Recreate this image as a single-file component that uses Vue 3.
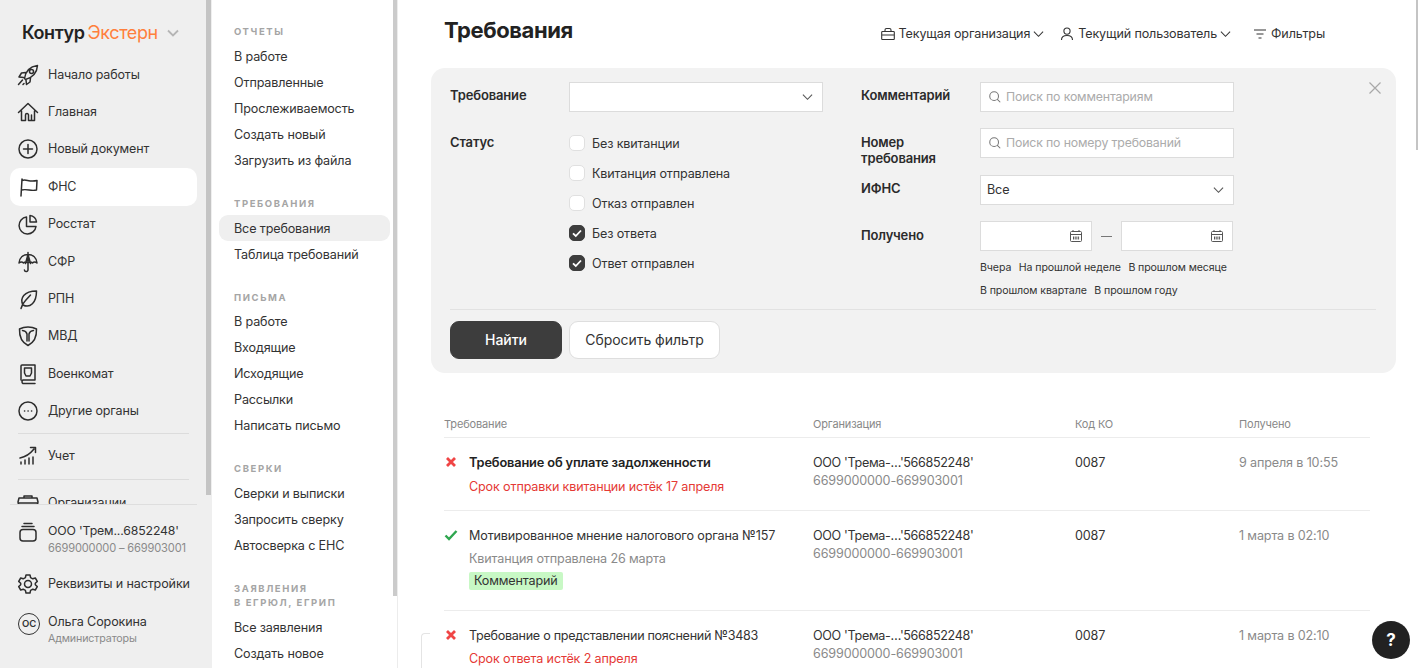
<script setup>
const reports = ['В работе', 'Отправленные', 'Прослеживаемость', 'Создать новый', 'Загрузить из файла']
const demands = ['Все требования', 'Таблица требований']
const letters = ['В работе', 'Входящие', 'Исходящие', 'Рассылки', 'Написать письмо']
const checks = ['Сверки и выписки', 'Запросить сверку', 'Автосверка с ЕНС']
const claims = ['Все заявления', 'Создать новое']
const statuses = [
  { label: 'Без квитанции', on: false },
  { label: 'Квитанция отправлена', on: false },
  { label: 'Отказ отправлен', on: false },
  { label: 'Без ответа', on: true },
  { label: 'Ответ отправлен', on: true },
]
const rows = [
  { ok: false, bold: true, title: 'Требование об уплате задолженности', sub: 'Срок отправки квитанции истёк 17 апреля', date: '9 апреля в 10:55' },
  { ok: true, title: 'Мотивированное мнение налогового органа №157', sub: 'Квитанция отправлена 26 марта', tag: 'Комментарий', date: '1 марта в 02:10' },
  { ok: false, tight: true, title: 'Требование о представлении пояснений №3483', sub: 'Срок ответа истёк 2 апреля', date: '1 марта в 02:10' },
]
const nav = [
  { label: 'Начало работы', icon: 'rocket' },
  { label: 'Главная', icon: 'home' },
  { label: 'Новый документ', icon: 'plus' },
  { label: 'ФНС', icon: 'flag', active: true },
  { label: 'Росстат', icon: 'pie' },
  { label: 'СФР', icon: 'umbrella' },
  { label: 'РПН', icon: 'leaf' },
  { label: 'МВД', icon: 'shield' },
  { label: 'Военкомат', icon: 'book' },
  { label: 'Другие органы', icon: 'dots' },
]
const paths = {
  rocket: 'M8.500 15.500C9.500 8 14.500 3.500 21.500 2.500c-.5 7-5 12-12 14zM9.500 9.500 5.500 10l-2.500 4 4.500.5M14.500 15l-.5 4-3.500 2.500-.5-4.500M15.500 6.500a2 2 0 1 0 2 2 2 2 0 0 0-2-2zM6.500 17 2.500 21.500M8 20.500l-1 1',
  home: 'M2.500 12.500 12 3.500l9.500 9M5.500 11v9.500H9.500V15a1.500 1.500 0 0 1 3 0v5.500M12.500 20.500h3V15M18.500 11v9.500h-3',
  plus: 'M12 3a9 9 0 1 0 0 18 9 9 0 0 0 0-18zM12 7.500v9M7.500 12h9',
  flag: 'M5 21 6 4M6 5.500c4-2 7 2 15 0l-.5 9.500c-6 1.500-9-1.500-15 0',
  pie: 'M10.500 5a8.500 8.500 0 1 0 9.500 9.500h-9.500zM14 3.500V10h6.500A7 7 0 0 0 14 3.500z',
  umbrella: 'M3 13C3.500 8 7 4.500 12 4.500s8.500 3.500 9 8.500c-1.500-1.500-3.300-1.500-4.500 0-1.200-1.500-3.300-1.500-4.500 0-1.200-1.500-3.300-1.500-4.500 0-1.200-1.500-3-1.500-4.500 0zM12 2.500V19.500a1.800 1.800 0 0 1-3.600.5M9.500 13.500 12 4.500l2.500 9',
  leaf: 'M5 21.500c1-3.500 2.500-6 4.500-8l5-5.500M7 18C3.500 11.500 8 4 20.500 4c0 12-6.500 17.500-13.500 14z',
  shield: 'M12 3c3 0 6 .7 8.500 2 .3 7.500-2.500 13.500-8.500 16.500C6 18.500 3.200 12.500 3.500 5 6 3.700 9 3 12 3zM6.500 6.500c2.500.2 4 1.500 4.500 3.500v7M17.500 6.500c-2.500.2-4 1.500-4.500 3.500v7',
  book: 'M5 18V4a1 1 0 0 1 1-1h13v15H7a2 2 0 0 0 0 3.500h12M8.500 6h7v5l-1.500 3h-4l-1.500-3z',
  dots: 'M12 3a9 9 0 1 0 0 18 9 9 0 0 0 0-18zM8.500 12h.2M12 12h.2M15.500 12h.2',
}
</script>

<template>
  <div class="page">
    <aside class="side">
      <div class="logo"><span class="logo-a">Контур</span><span class="logo-b">Экстерн</span>
        <svg class="logo-arrow" viewBox="0 0 12 8" width="12" height="8"><path d="M1 1.500 6 6.500l5-5" fill="none" stroke="#b5b5b5" stroke-width="1.800"/></svg>
      </div>
      <nav class="nav">
        <a v-for="n in nav" :key="n.label" class="nav-item" :class="{ active: n.active }">
          <svg class="ico" viewBox="0 0 24 24" width="24" height="24"><path :d="paths[n.icon]" /></svg>
          <span>{{ n.label }}</span>
        </a>
        <div class="nav-sep first"></div>
        <a class="nav-item short">
          <svg class="ico" viewBox="0 0 24 24" width="24" height="24"><path d="M5 20v-2M9 20v-4M13 20v-6M17 20v-7M4 14c5-1 10-4 14-9M14.500 3.500h5v5" /></svg>
          <span>Учет</span>
        </a>
        <div class="nav-sep"></div>
        <a class="nav-item clipped">
          <svg class="ico" viewBox="0 0 24 24" width="24" height="24"><path d="M8 7V5h8v2M3 7h18l1 4-2 8H4l-2-8zM2 12h20" /></svg>
          <span>Организации</span>
        </a>
      </nav>
      <footer class="side-foot">
        <a class="foot-item org-row">
          <svg class="ico" viewBox="0 0 24 24" width="24" height="24"><path d="M8 3.500h8M6 6.500h12M7 9.500h10a3 3 0 0 1 3 3V18a3 3 0 0 1-3 3H7a3 3 0 0 1-3-3v-5.500a3 3 0 0 1 3-3z" /></svg>
          <div><div class="org-name">ООО 'Трем...6852248'</div><div class="foot-sub">6699000000 – 669903001</div></div>
        </a>
        <a class="foot-item gear">
          <svg class="ico" viewBox="0 0 24 24" width="24" height="24"><path d="M12 8.500a3.500 3.500 0 1 0 0 7 3.500 3.500 0 0 0 0-7zM10 3h4l.6 2.600 2.200 1.200 2.500-.8 2 3.400-2 1.800v1.600l2 1.800-2 3.400-2.500-.8-2.200 1.200L14 21h-4l-.6-2.600-2.200-1.200-2.500.8-2-3.400 2-1.800v-1.600l-2-1.800 2-3.400 2.500.8 2.200-1.200z" /></svg>
          <span>Реквизиты и настройки</span>
        </a>
        <a class="foot-item user">
          <span class="avatar">ОС</span>
          <div><div>Ольга Сорокина</div><div class="foot-sub small">Администраторы</div></div>
        </a>
      </footer>
      <i class="bar side-bar"></i>
    </aside>

    <aside class="sub">
      <div class="group first">
        <div class="cap">ОТЧЕТЫ</div>
        <a v-for="t in reports" :key="t" class="sub-item">{{ t }}</a>
      </div>
      <div class="group">
        <div class="cap">ТРЕБОВАНИЯ</div>
        <a v-for="(t, i) in demands" :key="t" class="sub-item" :class="{ active: i === 0 }">{{ t }}</a>
      </div>
      <div class="group mail">
        <div class="cap">ПИСЬМА</div>
        <a v-for="t in letters" :key="t" class="sub-item">{{ t }}</a>
      </div>
      <div class="group">
        <div class="cap">СВЕРКИ</div>
        <a v-for="t in checks" :key="t" class="sub-item">{{ t }}</a>
      </div>
      <div class="group last">
        <div class="cap">ЗАЯВЛЕНИЯ<br>В ЕГРЮЛ, ЕГРИП</div>
        <a v-for="t in claims" :key="t" class="sub-item">{{ t }}</a>
      </div>
      <i class="bar sub-bar"></i>
    </aside>

    <main class="main">
      <header class="head">
        <h1>Требования</h1>
        <div class="tools">
          <a class="tool org">
            <svg viewBox="0 0 16 16" width="16" height="16"><path d="M2.500 5.500h11a.8.8 0 0 1 .8.8v6.400a.8.8 0 0 1-.8.8h-11a.8.8 0 0 1-.8-.8V6.300a.8.8 0 0 1 .8-.8zM5 5.500V4a1.500 1.500 0 0 1 1.500-1.500h3A1.500 1.500 0 0 1 11 4v1.500M1.700 9h12.600" /></svg>
            Текущая организация
            <svg class="chev" viewBox="0 0 12 8" width="11" height="8"><path d="M1 1.500 6 6.500l5-5" /></svg>
          </a>
          <a class="tool usr">
            <svg viewBox="0 0 16 16" width="16" height="16"><path d="M8 2a3 3 0 1 0 0 6.200A3 3 0 0 0 8 2zM2.500 14c0-3 2.200-4.500 5.500-4.500s5.500 1.500 5.500 4.500" /></svg>
            Текущий пользователь
            <svg class="chev" viewBox="0 0 12 8" width="11" height="8"><path d="M1 1.500 6 6.500l5-5" /></svg>
          </a>
          <a class="tool flt">
            <svg viewBox="0 0 16 16" width="16" height="16"><path d="M2 4h12M4.500 8h7M6.500 12h3" /></svg>
            Фильтры
          </a>
        </div>
      </header>

      <section class="panel">
        <svg class="close" viewBox="0 0 14 14" width="14" height="14"><path d="M1.500 1.500l11 11M12.500 1.500l-11 11" /></svg>
        <div class="cols">
          <div class="col left">
            <div class="line r1">
              <label>Требование</label>
              <div class="field w254 sel">
                <svg class="chev" viewBox="0 0 12 8" width="11" height="8"><path d="M1 1.500 6 6.500l5-5" /></svg>
              </div>
            </div>
            <div class="line r2">
              <label>Статус</label>
              <div class="checks">
                <div v-for="s in statuses" :key="s.label" class="check">
                  <span class="box" :class="{ on: s.on }">
                    <svg v-if="s.on" viewBox="0 0 16 16" width="16" height="16"><path d="M4 8.300l2.800 2.700L12 5.500" /></svg>
                  </span>
                  {{ s.label }}
                </div>
              </div>
            </div>
          </div>
          <div class="col right">
            <div class="line h46">
              <label>Комментарий</label>
              <div class="field w254 search">
                <svg viewBox="0 0 16 16" width="14" height="14"><path d="M7 2a5 5 0 1 0 0 10A5 5 0 0 0 7 2zM10.700 10.700 14 14" /></svg>
                Поиск по комментариям
              </div>
            </div>
            <div class="line h47">
              <label class="recv">Номер<br>требования</label>
              <div class="field w254 search">
                <svg viewBox="0 0 16 16" width="14" height="14"><path d="M7 2a5 5 0 1 0 0 10A5 5 0 0 0 7 2zM10.700 10.700 14 14" /></svg>
                Поиск по номеру требований
              </div>
            </div>
            <div class="line h46">
              <label>ИФНС</label>
              <div class="field w254 sel val">Все
                <svg class="chev" viewBox="0 0 12 8" width="11" height="8"><path d="M1 1.500 6 6.500l5-5" /></svg>
              </div>
            </div>
            <div class="line">
              <label class="recv">Получено</label>
              <div class="dates">
                <div class="range">
                  <div class="field date">
                    <svg viewBox="0 0 14 14" width="14" height="14"><path d="M2.500 2.500h9a1 1 0 0 1 1 1v8a1 1 0 0 1-1 1h-9a1 1 0 0 1-1-1v-8a1 1 0 0 1 1-1zM1.500 5.500h11M4 1v2M10 1v2M4.500 7.500v3M6.200 7.500v3M7.900 7.500v3M9.600 7.500v3" /></svg>
                  </div>
                  <span class="dash"></span>
                  <div class="field date">
                    <svg viewBox="0 0 14 14" width="14" height="14"><path d="M2.500 2.500h9a1 1 0 0 1 1 1v8a1 1 0 0 1-1 1h-9a1 1 0 0 1-1-1v-8a1 1 0 0 1 1-1zM1.500 5.500h11M4 1v2M10 1v2M4.500 7.500v3M6.200 7.500v3M7.900 7.500v3M9.600 7.500v3" /></svg>
                  </div>
                </div>
                <div class="quick">
                  <a>Вчера</a><a>На прошлой неделе</a><a>В прошлом месяце</a><a>В прошлом квартале</a><a>В прошлом году</a>
                </div>
              </div>
            </div>
          </div>
        </div>
        <div class="actions">
          <button class="btn primary">Найти</button>
          <button class="btn">Сбросить фильтр</button>
        </div>
      </section>

      <section class="table">
        <div class="tr th">
          <div>Требование</div><div>Организация</div><div>Код КО</div><div>Получено</div>
        </div>
        <div v-for="(r, i) in rows" :key="i" class="tr row" :class="{ tall: r.tag }">
          <div class="c-title">
            <svg v-if="r.ok" class="st ok" viewBox="0 0 14 12" width="14" height="12"><path d="M1.500 6.500 5 10l7.500-8" /></svg>
            <svg v-else class="st no" viewBox="0 0 12 12" width="14" height="12"><path d="M2 2l8 8M10 2l-8 8" /></svg>
            <div class="t-body">
              <div class="t-name" :class="{ b: r.bold, tight: r.tight }">{{ r.title }}</div>
              <div class="t-sub" :class="[r.ok ? 'gray' : 'red', { after: r.bold }]">{{ r.sub }}</div>
              <span v-if="r.tag" class="tag">{{ r.tag }}</span>
            </div>
          </div>
          <div class="c-org"><div class="o-name">ООО 'Трема-…'566852248'</div><div class="g">6699000000-669903001</div></div>
          <div class="c-code">0087</div>
          <div class="c-date">{{ r.date }}</div>
        </div>
      </section>
      <i class="bar main-bar"></i>
      <i class="ghost"></i>
      <a class="help">?</a>
    </main>
  </div>
</template>

<style>
html, body { margin: 0; height: 100%; overflow: hidden; background: #fff; }
</style>

<style scoped>
.page {
  display: flex;
  height: 668px;
  width: 1418px;
  overflow: hidden;
  font-family: "Inter", "Noto Sans", sans-serif;
  font-size: 12.600px;
  line-height: 18px;
  color: #333;
  background: #fff;
  letter-spacing: -0.15px;
}
a { color: inherit; text-decoration: none; }
.bar { position: absolute; display: block; background: #c9c9c9; }

.side {
  position: relative;
  width: 212px;
  flex: none;
  height: 668px;
  background: #efefef;
  display: flex;
  flex-direction: column;
}
.side-bar { left: 206px; top: 0; width: 5px; height: 495px; background: #c4c4c4; }
.logo {
  height: 56px;
  box-sizing: border-box;
  padding: 9px 0 0 22px;
  display: flex;
  align-items: center;
  font-size: 18px;
  letter-spacing: -0.4px;
  flex: none;
}
.logo-a { font-weight: 600; color: #222; }
.logo-b { color: #ff7f3c; margin-left: 3px; }
.logo-arrow { margin-left: 9px; }
.nav {
  flex: none;
  height: 448px;
  overflow: hidden;
  padding: 0 10px;
}
.nav-item {
  display: flex;
  align-items: center;
  height: 37.4px;
  padding-left: 6px;
  gap: 8px;
  width: 187px;
  box-sizing: border-box;
  border-radius: 10px;
  font-size: 12.500px;
}
.nav-item.active { background: #fff; }
.ico { flex: none; fill: none; stroke: #2d2d2d; stroke-width: 1.500; stroke-linecap: round; stroke-linejoin: round; }
.nav-sep { height: 1px; background: #dcdcdc; margin: 4px 8px 4px 8px; width: 171px; }
.nav-sep.first { margin-top: 3px; }
.nav-item.short { height: 37px; }
.nav-item.clipped { margin-top: 2px; }
.side-foot {
  margin: 0 15px 0 10px;
  border-top: 1px solid #dedede;
  padding-top: 17px;
}
.foot-item {
  display: flex;
  align-items: flex-start;
  gap: 8px;
  padding-left: 6px;
  height: 44px;
}
.org-name { font-size: 12.300px; }
.foot-item.org-row .ico { margin-top: -2px; }
.foot-item.gear { height: 36px; align-items: center; margin-bottom: 7px; }
.foot-item.user { height: 40px; padding-top: 4px; padding-left: 8px; gap: 8px; }
.foot-sub { font-size: 11.100px; color: #8a8a8a; line-height: 17px; }
.foot-sub.small { font-size: 10.700px; line-height: 16px; }
.avatar {
  width: 22px;
  height: 22px;
  box-sizing: border-box;
  border: 1px solid #333;
  border-radius: 50%;
  flex: none;
  display: flex;
  align-items: center;
  justify-content: center;
  font-size: 9.500px;
  font-weight: 600;
}

.sub {
  position: relative;
  width: 186px;
  flex: none;
  height: 668px;
  overflow: hidden;
  box-sizing: border-box;
  padding: 0 7px 0 7px;
  border-right: 1px solid #ececec;
}
.sub-bar { left: 181px; top: 0; width: 4px; height: 596px; background: #cbcbcb; }
.group { margin-top: 24px; }
.group.first { margin-top: 25px; }
.group.last { margin-top: 24px; }
.cap {
  font-size: 9.500px;
  font-weight: 700;
  letter-spacing: 1.600px;
  color: #a5a5a5;
  line-height: 14px;
  padding-left: 15px;
  margin-bottom: 4px;
}
.group.mail .cap { margin-bottom: 3px; }
.group.last .cap { margin-bottom: 4px; }
.sub-item {
  display: flex;
  align-items: center;
  height: 26px;
  box-sizing: border-box;
  padding: 2px 0 0 15px;
  border-radius: 9px;
}
.sub-item.active { background: #efefef; }

.main { position: relative; flex: 1; min-width: 0; }
.head {
  display: flex;
  align-items: center;
  height: 68px;
  padding: 0 93px 8px 46px;
  box-sizing: border-box;
  justify-content: space-between;
}
h1 { font-size: 22px; font-weight: 700; color: #222; margin: 0; letter-spacing: -0.4px; }
.tools { display: flex; align-items: center; margin-top: 7px; }
.tool { display: flex; align-items: center; gap: 3px; }
.tool svg { fill: none; stroke: #333; stroke-width: 1.100; }
.tool .chev { margin-left: 0; }
.org { margin-right: 15px; }
.usr { margin-right: 21px; }
.panel {
  position: relative;
  margin-left: 33px;
  width: 965px;
  height: 305px;
  box-sizing: border-box;
  background: #f2f2f2;
  border-radius: 14px;
  padding: 14px 20px 15px 19px;
}
.close { position: absolute; top: 13px; right: 14px; fill: none; stroke: #a8a8a8; stroke-width: 1.200; }
.cols { display: flex; height: 227px; gap: 38px; }
.col { width: 373px; }
.line { display: flex; }
label { width: 119px; flex: none; font-size: 13px; font-weight: 600; color: #2b2b2b; line-height: 16px; padding-top: 5px; box-sizing: border-box; }
label.recv { padding-top: 6px; }
.r1 { height: 47px; }
.field {
  height: 30px;
  background: #fff;
  border: 1px solid #dcdcdc;
  box-sizing: border-box;
  display: flex;
  align-items: center;
}
.w254 { width: 254px; }
.sel { justify-content: flex-end; padding-right: 9px; }
.sel .chev { fill: none; stroke: #555; stroke-width: 1.200; }
.val { justify-content: space-between; padding-left: 6px; }
.search { color: #ababab; padding-left: 7px; gap: 4px; font-size: 12.300px; }
.search svg { fill: none; stroke: #777; stroke-width: 1.200; }
.h46 { height: 46px; }
.h47 { height: 47px; }
.checks { display: flex; flex-direction: column; gap: 12px; padding-top: 6px; }
.check { display: flex; align-items: center; gap: 7px; height: 18px; }
.box {
  width: 16px;
  height: 16px;
  margin-top: -2px;
  background: #fff;
  border: 1px solid #e0e0e0;
  border-radius: 5px;
  box-sizing: border-box;
  flex: none;
  display: block;
  position: relative;
}
.box.on { background: #3d3d3d; border-color: #3d3d3d; }
.box svg { position: absolute; left: -1px; top: -1px; fill: none; stroke: #fff; stroke-width: 1.800; }
.dates { width: 254px; }
.range { display: flex; align-items: center; }
.date { width: 112px; justify-content: flex-end; padding-right: 8px; }
.date svg { fill: none; stroke: #555; stroke-width: 1; }
.dash { width: 11px; height: 1px; background: #777; margin: 0 9px; }
.quick {
  display: flex;
  flex-wrap: wrap;
  gap: 7px 7.500px;
  font-size: 10.600px;
  line-height: 16px;
  margin-top: 9px;
  letter-spacing: -0.1px;
}
.actions {
  border-top: 1px solid #e2e2e2;
  display: flex;
  gap: 7px;
  padding-top: 11px;
}
.btn {
  font: inherit;
  font-size: 14px;
  letter-spacing: -0.05px;
  height: 38px;
  width: 151px;
  padding: 0;
  background: #fff;
  color: #333;
  border: 1px solid #dedede;
  border-radius: 9px;
  box-sizing: border-box;
}
.btn.primary { width: 112px; background: #3d3d3d; color: #fff; border-color: #3d3d3d; font-weight: 500; }

.table { margin: 42px 48px 0 46px; }
.tr { display: grid; grid-template-columns: 369px 262px 164px 1fr; border-bottom: 1px solid #ececec; }
.th { font-size: 11px; line-height: 14px; color: #888; height: 20px; padding-top: 2px; }
.row { height: 73px; padding-top: 16px; box-sizing: border-box; }
.row.tall { height: 100px; }
.c-title { display: flex; gap: 11px; }
.st { flex: none; fill: none; margin-top: 2px; }
.ok { stroke: #2fa64f; stroke-width: 2.400; }
.no { stroke: #f04545; stroke-width: 2.800; }
.t-name.b { font-size: 12.800px; font-weight: 600; color: #222; }
.t-name.tight { letter-spacing: -0.3px; }
.t-sub { margin-top: 5px; }
.t-sub.after { margin-top: 6px; }
.red { color: #e53935; }
.gray { color: #8a8a8a; }
.tag {
  display: inline-block;
  margin-top: 4px;
  background: #c8f8c5;
  border-radius: 2px;
  padding: 0 5px;
  line-height: 18px;
}
.o-name { letter-spacing: -0.35px; }
.g { color: #8a8a8a; }
.c-org { line-height: 18px; }
.c-date { color: #8a8a8a; }
.main-bar { right: 0; top: 0; width: 2px; height: 150px; background: #c4c4c4; }
.ghost { position: absolute; left: 23px; top: 633px; width: 8px; height: 40px; border: 1px solid #e4e4e4; border-right: 0; border-bottom: 0; border-top-left-radius: 4px; }
.help {
  position: absolute;
  right: 8px;
  bottom: 9px;
  width: 38px;
  height: 38px;
  border-radius: 50%;
  background: #222;
  color: #fff;
  display: flex;
  align-items: center;
  justify-content: center;
  font-size: 17px;
  font-weight: 700;
}
</style>
